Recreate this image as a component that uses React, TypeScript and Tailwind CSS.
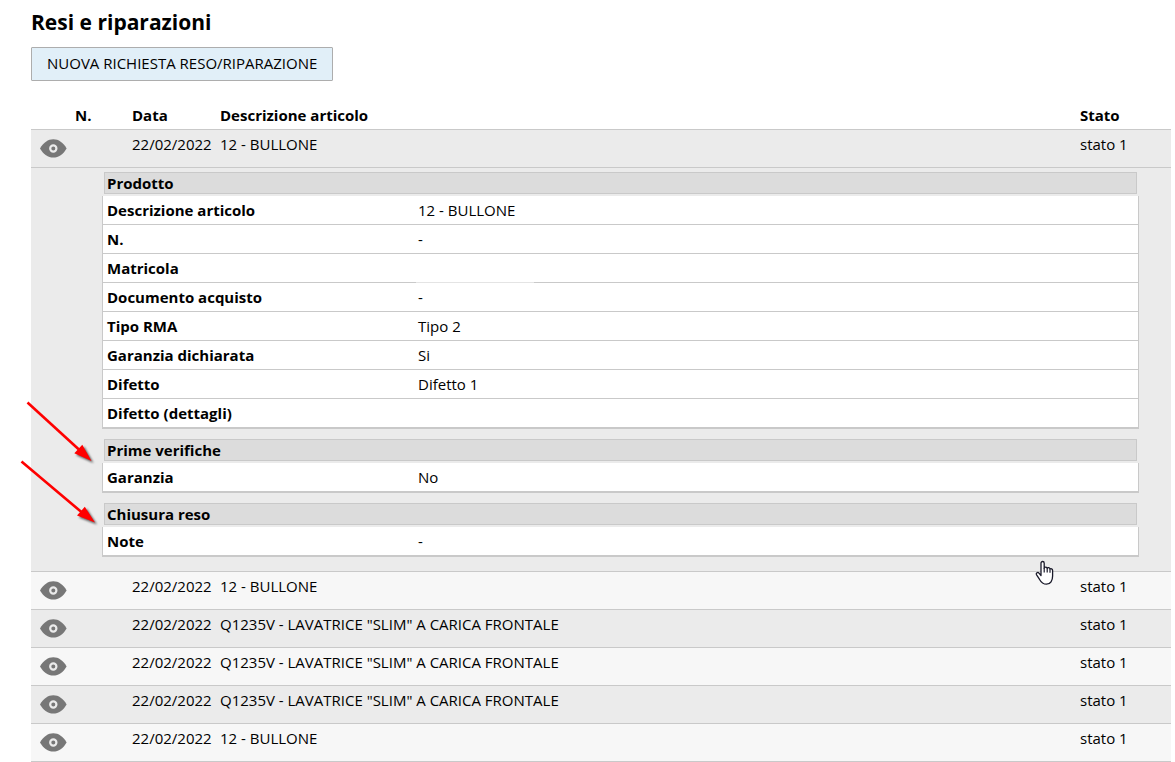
import { useState } from "react";

interface Field {
  label: string;
  value: string;
  masked?: boolean;
}

interface Section {
  title: string;
  fields: Field[];
}

interface Request {
  id: number;
  date: string;
  item: string;
  status: string;
}

const requests: Request[] = [
  { id: 1, date: "22/02/2022", item: "12 - BULLONE", status: "stato 1" },
  { id: 2, date: "22/02/2022", item: "12 - BULLONE", status: "stato 1" },
  { id: 3, date: "22/02/2022", item: 'Q1235V - LAVATRICE "SLIM" A CARICA FRONTALE', status: "stato 1" },
  { id: 4, date: "22/02/2022", item: 'Q1235V - LAVATRICE "SLIM" A CARICA FRONTALE', status: "stato 1" },
  { id: 5, date: "22/02/2022", item: 'Q1235V - LAVATRICE "SLIM" A CARICA FRONTALE', status: "stato 1" },
  { id: 6, date: "22/02/2022", item: "12 - BULLONE", status: "stato 1" },
];

const sections: Section[] = [
  {
    title: "Prodotto",
    fields: [
      { label: "Descrizione articolo", value: "12 - BULLONE" },
      { label: "N.", value: "-" },
      { label: "Matricola", value: "", masked: true },
      { label: "Documento acquisto", value: "-" },
      { label: "Tipo RMA", value: "Tipo 2" },
      { label: "Garanzia dichiarata", value: "Si" },
      { label: "Difetto", value: "Difetto 1" },
      { label: "Difetto (dettagli)", value: "" },
    ],
  },
  { title: "Prime verifiche", fields: [{ label: "Garanzia", value: "No" }] },
  { title: "Chiusura reso", fields: [{ label: "Note", value: "-" }] },
];

const EyeIcon = () => (
  <svg width="28" height="20" viewBox="0 0 28 20" aria-hidden="true">
    <path
      d="M1 10.500C4.500 4.600 9 1.300 14.300 1.300S24.200 4.600 27.600 10.500C24.200 16.400 19.600 19.600 14.300 19.600S4.500 16.400 1 10.500z"
      fill="#777"
    />
    <circle cx="14.300" cy="10.500" r="3.100" fill="none" stroke="#ebebeb" strokeWidth="2.200" />
  </svg>
);

const Arrows = () => (
  <svg
    className="absolute left-5 top-[400px] pointer-events-none"
    width="84"
    height="130"
    viewBox="0 0 84 130"
    aria-hidden="true"
  >
    <g stroke="#f00" strokeWidth="2.600">
      <path d="M7.500 2.500L60 50.500" />
      <path d="M1.500 61.500L62 112.500" />
    </g>
    <g fill="#f00" className="drop-shadow-[2px_2px_1px_rgba(0,0,0,0.6)]">
      <path d="M54.300 53.200L62.300 44.800L71.500 61z" />
      <path d="M57 115.500L64.800 106.800L75 122.500z" />
    </g>
  </svg>
);

const HandCursor = () => (
  <svg
    className="absolute right-[120px] top-[560px] pointer-events-none"
    width="20"
    height="26"
    viewBox="0 0 20 26"
    aria-hidden="true"
  >
    <path
      d="M6 15.500V3.200C6 .9 9.200 .9 9.200 3.200V8.200C9.600 6.600 12 6.800 12.200 8.400C12.800 7.200 14.800 7.600 15 9.100C15.800 8.200 17.600 8.800 17.600 10.400V16C17.600 20.500 15.500 24.200 11.500 24.200C7.800 24.200 6.200 22.400 4.400 19.200L1.600 14.800C.6 13 2.800 11.800 4 13.200z"
      fill="#fff"
      stroke="#1a1a2a"
      strokeWidth="1.300"
      strokeLinejoin="round"
    />
    <path d="M9.200 8v4.500M12.200 8.500v4M15 9.200v3.500" stroke="#1a1a2a" strokeWidth="1.200" />
  </svg>
);

const DetailSection = ({ section }: { section: Section }) => (
  <section>
    <h2 className="mx-0.5 mb-0.5 border border-[#c9c9c9] bg-[#dcdcdc] pl-0.5 leading-5 font-bold">
      {section.title}
    </h2>
    <table className="w-full table-fixed border-separate border-spacing-0 border-x border-b border-[#c9c9c9] bg-white">
      <tbody>
        {section.fields.map((field) => (
          <tr key={field.label}>
            <th scope="row" className="w-[311px] h-[29px] border-b border-[#c9c9c9] pl-1 text-left font-bold">
              {field.label}
            </th>
            <td className="relative border-b border-[#c9c9c9] pl-1">
              {field.value}
              {field.masked && <span className="absolute left-0.5 -bottom-px h-px w-[118px] bg-[#e4e4e4]" />}
            </td>
          </tr>
        ))}
      </tbody>
    </table>
  </section>
);

const App = () => {
  const [openId, setOpenId] = useState<number | null>(1);

  return (
    <main className="relative pt-2 pr-1 pl-[31px] font-['Open_Sans',sans-serif] text-[15px] leading-5 text-black">
      <h1 className="text-[21px] leading-7 font-bold">Resi e riparazioni</h1>
      <button
        type="button"
        className="mt-[11px] h-[34px] rounded-[1px] border border-[#adadad] bg-[#e1eff8] px-[15px] pb-0.5"
      >
        NUOVA RICHIESTA RESO/RIPARAZIONE
      </button>

      <table className="mt-5 w-full table-fixed border-separate border-spacing-0">
        <thead>
          <tr className="h-7 text-left">
            <th className="w-11" aria-label="Dettagli" />
            <th className="w-[57px]">N.</th>
            <th className="w-[88px]">Data</th>
            <th>Descrizione articolo</th>
            <th className="w-[91px]">Stato</th>
          </tr>
        </thead>
        {requests.map((request) => (
          <tbody key={request.id} className="odd:bg-[#f7f7f7] even:bg-[#ebebeb]">
            <tr className="h-[38px] align-top [&>td]:border-t [&>td]:border-[#c9c9c9]">
              <td className="pt-2 pl-2">
                <button
                  type="button"
                  className="block"
                  aria-label="Mostra dettagli"
                  aria-expanded={openId === request.id}
                  onClick={() => setOpenId(openId === request.id ? null : request.id)}
                >
                  <EyeIcon />
                </button>
              </td>
              <td />
              <td className="pt-1">{request.date}</td>
              <td className="pt-1">{request.item}</td>
              <td className="pt-1">{request.status}</td>
            </tr>
            {openId === request.id && (
              <tr>
                <td colSpan={5} className="border-t border-[#c9c9c9] pt-1 pr-8 pb-3.5 pl-[71px]">
                  <div className="flex flex-col gap-2.5">
                    {sections.map((section) => (
                      <DetailSection key={section.title} section={section} />
                    ))}
                  </div>
                </td>
              </tr>
            )}
          </tbody>
        ))}
        <tfoot>
          <tr>
            <td colSpan={5} className="h-px border-t border-[#c9c9c9]" />
          </tr>
        </tfoot>
      </table>

      <Arrows />
      <HandCursor />
    </main>
  );
};

export default App;
